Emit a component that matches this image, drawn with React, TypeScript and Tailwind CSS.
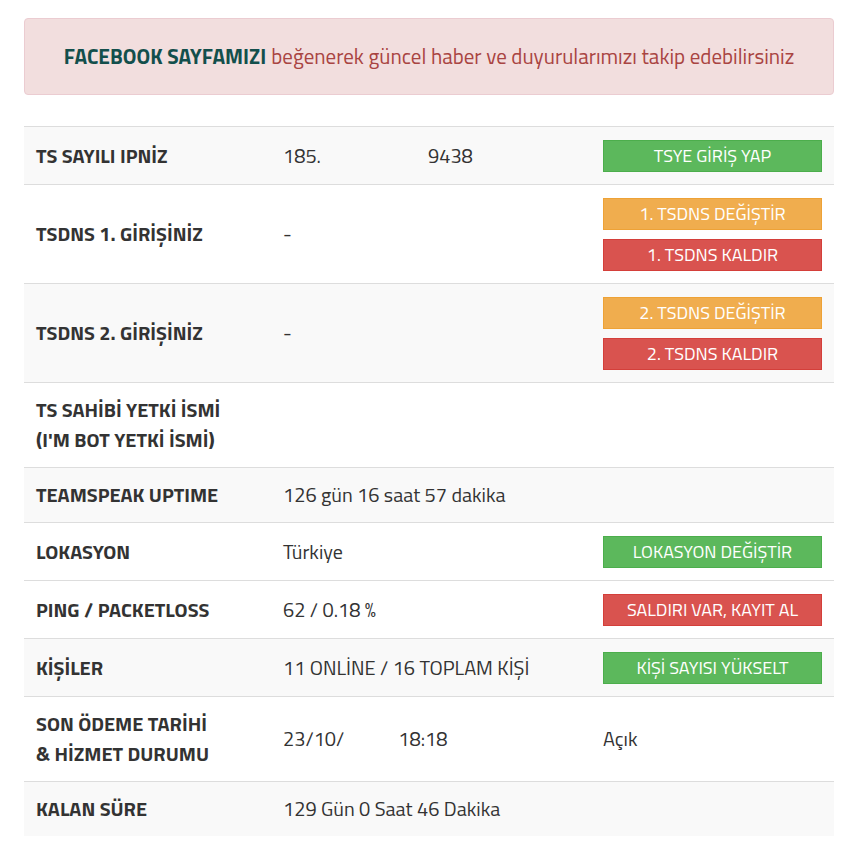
import type { ReactNode } from 'react';

type Tone = 'green' | 'orange' | 'red';

const TONE: Record<Tone, string> = {
  green: 'bg-[#5cb85c] border-[#4cae4c]',
  orange: 'bg-[#f0ad4e] border-[#eea236]',
  red: 'bg-[#d9534f] border-[#d43f3a]',
};

function Btn({ tone, children }: { tone: Tone; children: ReactNode }) {
  return (
    <div
      className={`h-[32px] w-[219px] border flex items-center justify-center text-white text-[18px] leading-none ${TONE[tone]}`}
    >
      {children}
    </div>
  );
}

interface RowProps {
  label: ReactNode;
  value?: ReactNode;
  action?: ReactNode;
  striped?: boolean;
  h: string;
}

function Row({ label, value, action, striped, h }: RowProps) {
  return (
    <div
      className={`grid grid-cols-[247px_320px_243px] items-center border-t border-[#dddddd] ${h} ${
        striped ? 'bg-[#f9f9f9]' : 'bg-white'
      }`}
    >
      <div className="px-3 font-bold text-[20px] leading-[30px] text-[#333]">{label}</div>
      <div className="px-3 text-[20px] text-[#333]">{value}</div>
      <div className="px-3 flex flex-col gap-[9px] text-[20px] text-[#333]">{action}</div>
    </div>
  );
}

export default function App() {
  return (
    <div
      className="min-h-screen bg-white px-6 pt-[18px]"
      style={{ fontFamily: "'Titillium Web', Lato, 'Open Sans', sans-serif" }}
    >
      <div className="h-[77px] w-[810px] rounded border border-[#ebccd1] bg-[#f2dede] flex items-center justify-center text-[21px] text-[#a94442]">
        <span className="font-bold text-[#134f4c] mr-[5px]">FACEBOOK SAYFAMIZI</span>
        beğenerek güncel haber ve duyurularımızı takip edebilirsiniz
      </div>

      <div className="mt-[31px] w-[810px]">
        <Row
          striped
          h="h-[58px]"
          label="TS SAYILI IPNİZ"
          value={
            <span className="flex">
              <span className="w-[145px]">185.</span>
              <span>9438</span>
            </span>
          }
          action={<Btn tone="green">TSYE GİRİŞ YAP</Btn>}
        />
        <Row
          h="h-[99px]"
          label="TSDNS 1. GİRİŞİNİZ"
          value="-"
          action={
            <>
              <Btn tone="orange">1. TSDNS DEĞİŞTİR</Btn>
              <Btn tone="red">1. TSDNS KALDIR</Btn>
            </>
          }
        />
        <Row
          striped
          h="h-[99px]"
          label="TSDNS 2. GİRİŞİNİZ"
          value="-"
          action={
            <>
              <Btn tone="orange">2. TSDNS DEĞİŞTİR</Btn>
              <Btn tone="red">2. TSDNS KALDIR</Btn>
            </>
          }
        />
        <Row
          h="h-[85px]"
          label={
            <>
              TS SAHİBİ YETKİ İSMİ
              <br />
              (I'M BOT YETKİ İSMİ)
            </>
          }
        />
        <Row striped h="h-[55px]" label="TEAMSPEAK UPTIME" value="126 gün 16 saat 57 dakika" />
        <Row
          h="h-[58px]"
          label="LOKASYON"
          value="Türkiye"
          action={<Btn tone="green">LOKASYON DEĞİŞTİR</Btn>}
        />
        <Row
          h="h-[58px]"
          label="PING / PACKETLOSS"
          value="62 / 0.18 %"
          action={<Btn tone="red">SALDIRI VAR, KAYIT AL</Btn>}
        />
        <Row
          striped
          h="h-[58px]"
          label="KİŞİLER"
          value="11 ONLİNE / 16 TOPLAM KİŞİ"
          action={<Btn tone="green">KİŞİ SAYISI YÜKSELT</Btn>}
        />
        <Row
          h="h-[85px]"
          label={
            <>
              SON ÖDEME TARİHİ
              <br />& HİZMET DURUMU
            </>
          }
          value={
            <span className="flex items-center">
              23/10/
              <span className="inline-block w-[48px] h-[28px] bg-white mr-[6px]" />
              18:18
            </span>
          }
          action={<span>Açık</span>}
        />
        <Row striped h="h-[55px]" label="KALAN SÜRE" value="129 Gün 0 Saat 46 Dakika" />
      </div>
    </div>
  );
}
